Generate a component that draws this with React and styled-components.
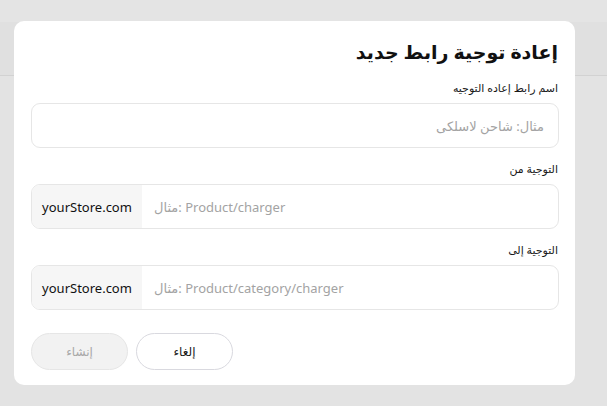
import React from 'react';
import styled, { createGlobalStyle } from 'styled-components';

const GlobalStyle = createGlobalStyle`
  html, body {
    margin: 0;
    padding: 0;
    background: #e3e3e3;
    font-family: "Noto Sans", "DejaVu Sans", sans-serif;
  }
  * { box-sizing: border-box; }
`;

const Page = styled.div`
  position: relative;
  width: 607px;
  height: 406px;
  overflow: hidden;
  background: #e3e3e3;
`;

const TopBar = styled.div`
  height: 22px;
  background: #e4e4e4;
`;

const Toolbar = styled.div`
  height: 54px;
  background: #e0e0e0;
  border-bottom: 1px solid #d2d2d2;
`;

const Dialog = styled.div`
  position: absolute;
  left: 14px;
  top: 21px;
  width: 561px;
  height: 364px;
  background: #fff;
  border-radius: 10px;
  padding: 14px 16px 0 17px;
  direction: rtl;
  display: flex;
  flex-direction: column;
`;

const Title = styled.h2`
  margin: 0;
  font-size: 19px;
  font-weight: 700;
  color: #111;
  line-height: 34px;
  padding-right: 1px;
`;

const Field = styled.div`
  display: flex;
  flex-direction: column;
  margin-top: ${p => p.$top}px;
`;

const Label = styled.label`
  font-size: 11px;
  color: #1a1a1a;
  line-height: 16px;
  margin-bottom: 7px;
  padding-right: 1px;
`;

const Input = styled.div`
  height: 45px;
  border: 1px solid #e6e6e6;
  border-radius: 9px;
  display: flex;
  align-items: center;
  padding: 0 14px;
  font-size: 13px;
  color: #a3a3a3;
`;

const Group = styled.div`
  direction: ltr;
  height: 45px;
  border: 1px solid #e6e6e6;
  border-radius: 9px;
  display: flex;
  overflow: hidden;
`;

const Prefix = styled.div`
  width: 110px;
  background: #f6f6f6;
  display: flex;
  align-items: center;
  justify-content: center;
  font-size: 13px;
  color: #111;
`;

const Placeholder = styled.div`
  flex: 1;
  display: flex;
  align-items: center;
  padding-left: 12px;
  font-size: 13px;
  color: #a3a3a3;
`;

const Actions = styled.div`
  direction: ltr;
  display: flex;
  gap: 8px;
  margin-top: 23px;
`;

const Button = styled.button`
  width: 97px;
  height: 37px;
  border-radius: 19px;
  border: 1px solid ${p => (p.$disabled ? '#e6e6e6' : '#d9d9df')};
  background: ${p => (p.$disabled ? '#f2f2f2' : '#fff')};
  color: ${p => (p.$disabled ? '#a8a8a8' : '#1a1a1a')};
  font-family: inherit;
  font-size: 12px;
  cursor: pointer;
`;

export default function App() {
  return (
    <Page>
      <GlobalStyle />
      <TopBar />
      <Toolbar />
      <Dialog>
        <Title>إعادة توجية رابط جديد</Title>
        <Field $top={11}>
          <Label>اسم رابط إعاده التوجيه</Label>
          <Input>مثال: شاحن لاسلكى</Input>
        </Field>
        <Field $top={13}>
          <Label>التوجية من</Label>
          <Group>
            <Prefix>yourStore.com</Prefix>
            <Placeholder>مثال: Product/charger</Placeholder>
          </Group>
        </Field>
        <Field $top={13}>
          <Label>التوجية إلى</Label>
          <Group>
            <Prefix>yourStore.com</Prefix>
            <Placeholder>مثال: Product/category/charger</Placeholder>
          </Group>
        </Field>
        <Actions>
          <Button $disabled>إنشاء</Button>
          <Button>إلغاء</Button>
        </Actions>
      </Dialog>
    </Page>
  );
}
